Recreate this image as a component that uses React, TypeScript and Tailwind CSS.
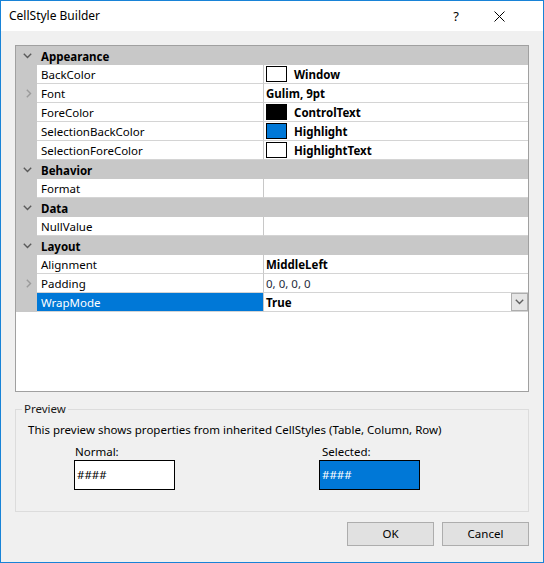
import React from "react";

type Prop = {
  name: string;
  value?: string;
  swatch?: string;
  bold?: boolean;
  expand?: boolean;
  selected?: boolean;
  dropdown?: boolean;
};

type Group = { title: string; items: Prop[] };

const groups: Group[] = [
  {
    title: "Appearance",
    items: [
      { name: "BackColor", value: "Window", swatch: "#ffffff", bold: true },
      { name: "Font", value: "Gulim, 9pt", bold: true, expand: true },
      { name: "ForeColor", value: "ControlText", swatch: "#000000", bold: true },
      { name: "SelectionBackColor", value: "Highlight", swatch: "#0078d7", bold: true },
      { name: "SelectionForeColor", value: "HighlightText", swatch: "#ffffff", bold: true },
    ],
  },
  { title: "Behavior", items: [{ name: "Format" }] },
  { title: "Data", items: [{ name: "NullValue" }] },
  {
    title: "Layout",
    items: [
      { name: "Alignment", value: "MiddleLeft", bold: true },
      { name: "Padding", value: "0, 0, 0, 0", expand: true },
      { name: "WrapMode", value: "True", bold: true, selected: true, dropdown: true },
    ],
  },
];

const ChevronDown = ({ color = "#5a5a5a" }: { color?: string }) => (
  <svg width="9" height="6" viewBox="0 0 9 6" fill="none">
    <path d="M0.8 0.8 L4.5 4.5 L8.2 0.8" stroke={color} strokeWidth="1.4" />
  </svg>
);

const ChevronRight = () => (
  <svg width="6" height="9" viewBox="0 0 6 9" fill="none">
    <path d="M0.8 0.8 L4.5 4.5 L0.8 8.2" stroke="#9a9a9a" strokeWidth="1.4" />
  </svg>
);

function HeaderRow({ title }: { title: string }) {
  return (
    <div className="flex h-[19px] items-center bg-[#c8c8c8]">
      <div className="flex w-[21px] justify-center pl-[2px]">
        <ChevronDown />
      </div>
      <span className="pl-[4px] pt-[2px] font-bold text-black">{title}</span>
    </div>
  );
}

function PropRow({ p }: { p: Prop }) {
  return (
    <div className="flex h-[19px]">
      <div className="flex w-[21px] items-center justify-center bg-[#c8c8c8] pl-[4px]">
        {p.expand && <ChevronRight />}
      </div>
      <div
        className={
          p.selected
            ? "flex w-[227px] items-center border-r border-b border-r-[#c8c8c8] border-b-[#d4d4d4] bg-[#0078d7] pl-[4px] pt-[1px] text-white"
            : "flex w-[227px] items-center border-r border-b border-r-[#c8c8c8] border-b-[#d4d4d4] bg-white pl-[4px] pt-[1px] text-black"
        }
      >
        {p.name}
      </div>
      <div className="flex flex-1 items-center border-b border-[#d4d4d4] bg-white pl-[2px]">
        {p.swatch && (
          <span
            className="mr-[7px] h-[16px] w-[21px] border border-black"
            style={{ backgroundColor: p.swatch }}
          />
        )}
        <span className={p.bold ? "flex-1 pt-[1px] font-bold text-black" : "flex-1 pt-[1px] text-[#1f2d3d]"}>
          {p.value}
        </span>
        {p.dropdown && (
          <span className="flex h-[18px] w-[17px] items-center justify-center border border-[#adadad] bg-[#e5e5e5]">
            <ChevronDown color="#606060" />
          </span>
        )}
      </div>
    </div>
  );
}

export default function App() {
  return (
    <div
      className="flex h-[563px] w-[544px] flex-col border border-[#1883d7] bg-[#f0f0f0] text-[11.5px] leading-[16px] text-black"
      style={{ fontFamily: '"Noto Sans", "Open Sans", sans-serif' }}
    >
      {/* title bar */}
      <div className="flex h-[30px] items-center bg-white pl-[8px] text-[12px]">
        <span className="flex-1">CellStyle Builder</span>
        <span className="w-[30px] text-center text-[13px]">?</span>
        <span className="ml-[13px] mr-[29px] flex w-[30px] justify-center">
          <svg width="11" height="11" viewBox="0 0 11 11" fill="none">
            <path d="M0.5 0.5 L10.5 10.5 M10.5 0.5 L0.5 10.5" stroke="#000" strokeWidth="1" />
          </svg>
        </span>
      </div>

      <div className="flex flex-1 flex-col px-[14px] pt-[14px]">
        {/* property grid */}
        <div className="flex h-[347px] flex-col border border-[#a0a0a0] bg-white">
          {groups.map((g) => (
            <div key={g.title} className="flex flex-col">
              <HeaderRow title={g.title} />
              {g.items.map((p) => (
                <PropRow key={p.name} p={p} />
              ))}
            </div>
          ))}
        </div>

        {/* preview */}
        <fieldset className="mt-[9px] h-[111px] border border-[#dcdcdc] pb-[21px]">
          <legend className="ml-[6px] px-[2px] text-[#1a1a1a]">Preview</legend>
          <p className="mt-[5px] pl-[12px]">This preview shows properties from inherited CellStyles (Table, Column, Row)</p>
          <div className="mt-[6px] flex pl-[58px]">
            <div className="flex w-[101px] flex-col">
              <span className="pl-[1px]">Normal:</span>
              <div className="flex h-[30px] items-center border border-black bg-white pl-[2px]">####</div>
            </div>
            <div className="ml-[144px] flex w-[101px] flex-col">
              <span className="pl-[3px]">Selected:</span>
              <div className="flex h-[30px] items-center border border-black bg-[#0078d7] pl-[2px] text-white">
                ####
              </div>
            </div>
          </div>
        </fieldset>

        {/* buttons */}
        <div className="mt-[10px] flex justify-end gap-[8px]">
          <button className="h-[24px] w-[87px] border border-[#adadad] bg-[#e1e1e1]">OK</button>
          <button className="h-[24px] w-[87px] border border-[#adadad] bg-[#e1e1e1]">Cancel</button>
        </div>
      </div>
    </div>
  );
}
